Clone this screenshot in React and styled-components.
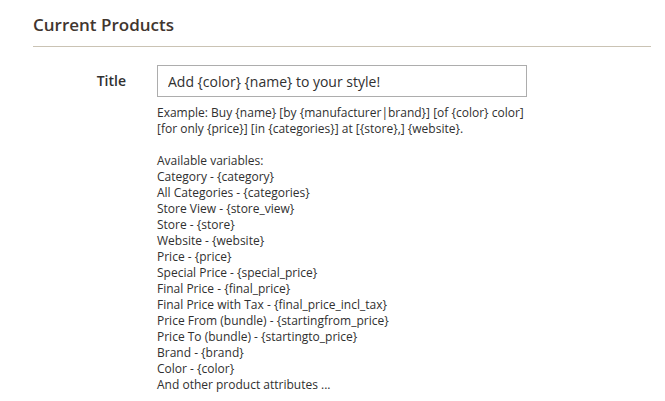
import React from 'react';
import styled, { createGlobalStyle } from 'styled-components';

const variables = [
  'Category - {category}',
  'All Categories - {categories}',
  'Store View - {store_view}',
  'Store - {store}',
  'Website - {website}',
  'Price - {price}',
  'Special Price - {special_price}',
  'Final Price - {final_price}',
  'Final Price with Tax - {final_price_incl_tax}',
  'Price From (bundle) - {startingfrom_price}',
  'Price To (bundle) - {startingto_price}',
  'Brand - {brand}',
  'Color - {color}',
  'And other product attributes ...',
];

const App = () => {
  return (
    <>
      <GlobalStyle />
      <Section>
        <SectionTitle>Current Products</SectionTitle>
        <Field>
          <Label>Title</Label>
          <Control>
            <Input type='text' defaultValue='Add {color} {name} to your style!' />
            <Note>
              <span>
                Example: Buy {'{name}'} [by {'{manufacturer|brand}'}] [of {'{color}'} color]
              </span>
              <span>
                [for only {'{price}'}] [in {'{categories}'}] at [{'{store}'},] {'{website}'}.
              </span>
              <Gap />
              <span>Available variables:</span>
              {variables.map((v) => (
                <span key={v}>{v}</span>
              ))}
            </Note>
          </Control>
        </Field>
      </Section>
    </>
  );
};

export default App;

const GlobalStyle = createGlobalStyle`
  body {
    margin: 0;
    background: #fff;
    font-family: 'Open Sans', 'Liberation Sans', sans-serif;
    color: #303030;
  }
`;

const Section = styled.div`
  width: 618px;
  padding: 14px 0 0 33px;
`;

const SectionTitle = styled.h2`
  margin: 0;
  font-size: 17px;
  font-weight: 600;
  color: #41362f;
  line-height: 22px;
  padding-bottom: 10px;
  border-bottom: 1px solid #cac3b4;
`;

const Field = styled.div`
  display: grid;
  grid-template-columns: 93px 370px;
  column-gap: 31px;
  margin-top: 18px;
`;

const Label = styled.label`
  text-align: right;
  font-size: 14px;
  font-weight: 600;
  line-height: 32px;
  color: #303030;
`;

const Control = styled.div`
  display: flex;
  flex-direction: column;
`;

const Input = styled.input`
  box-sizing: border-box;
  height: 32px;
  width: 100%;
  border: 1px solid #adadad;
  padding: 0 10px;
  font-family: inherit;
  font-size: 14px;
  color: #303030;
  outline: none;
`;

const Note = styled.div`
  display: flex;
  flex-direction: column;
  margin-top: 8px;
  font-size: 12px;
  line-height: 16px;
  color: #303030;
  white-space: nowrap;
`;

const Gap = styled.div`
  height: 16px;
`;
